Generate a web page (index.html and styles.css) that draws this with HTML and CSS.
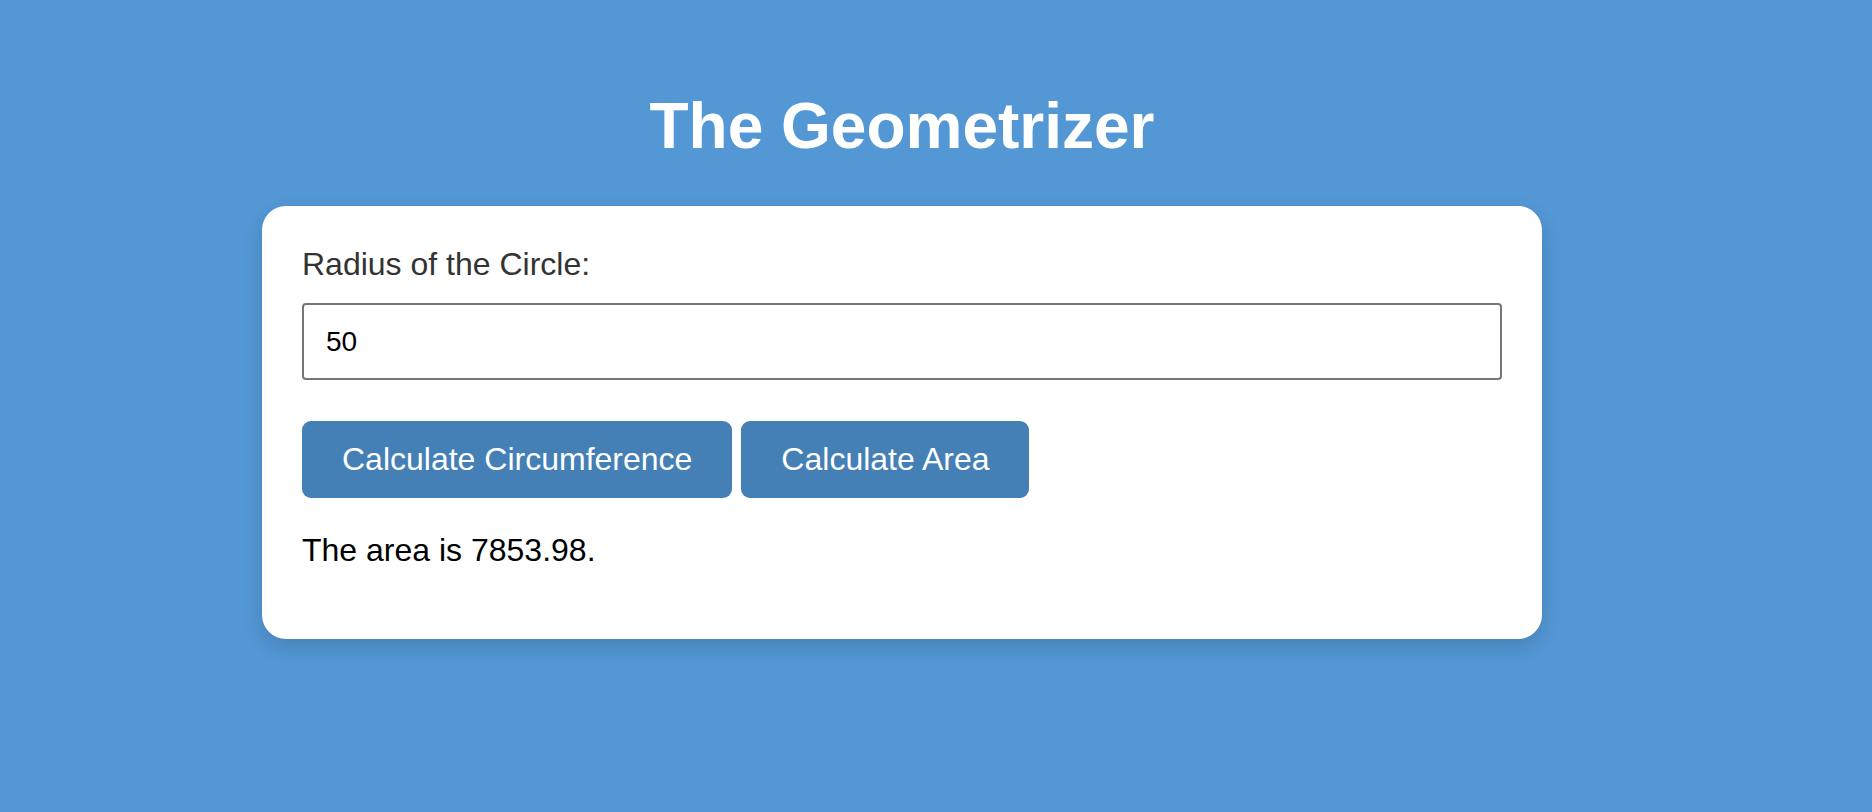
FILE: index.html
```html
<!DOCTYPE html>
<html lang="en">
<head>
<meta charset="utf-8">
<title>The Geometrizer</title>
<link rel="stylesheet" href="styles.css">
</head>
<body>
<main class="page">
  <h1 class="title">The Geometrizer</h1>
  <section class="card">
    <label class="field-label" for="radius">Radius of the Circle:</label>
    <input class="field-input" id="radius" type="text" value="50">
    <div class="actions">
      <button class="btn" type="button">Calculate Circumference</button>
      <button class="btn" type="button">Calculate Area</button>
    </div>
    <p class="result">The area is 7853.98.</p>
  </section>
</main>
</body>
</html>
```

FILE: styles.css
```css
html, body {
  margin: 0;
  padding: 0;
}

body {
  background: #5397d5;
  font-family: "Liberation Sans", Arial, Helvetica, sans-serif;
  min-height: 812px;
  padding-right: 68px;
  box-sizing: border-box;
}

.page {
  max-width: 1280px;
  margin: 0 auto;
  padding-top: 89px;
}

.title {
  margin: 0 0 43px;
  text-align: center;
  color: #ffffff;
  font-size: 64px;
  font-weight: bold;
  line-height: normal;
}

.card {
  background: #ffffff;
  border-radius: 24px;
  padding: 40px;
  box-shadow: 0 8px 20px rgba(0, 0, 0, 0.14);
}

.field-label {
  display: block;
  color: #333333;
  font-size: 32px;
  line-height: normal;
  margin-bottom: 20px;
}

.field-input {
  display: block;
  box-sizing: border-box;
  width: 100%;
  height: 77px;
  padding: 0 22px;
  border: 2px solid #767676;
  border-radius: 4px;
  font-family: "Liberation Sans", Arial, Helvetica, sans-serif;
  font-size: 28px;
  color: #000000;
  background: #ffffff;
  outline: none;
}

.actions {
  display: flex;
  gap: 9px;
  margin-top: 41px;
}

.btn {
  background: #447fb6;
  color: #ffffff;
  border: none;
  border-radius: 9px;
  padding: 20px 40px;
  font-family: "Liberation Sans", Arial, Helvetica, sans-serif;
  font-size: 32px;
  line-height: normal;
  cursor: pointer;
}

.result {
  margin: 34px 0 30px;
  font-size: 32px;
  line-height: normal;
  color: #000000;
}
```
